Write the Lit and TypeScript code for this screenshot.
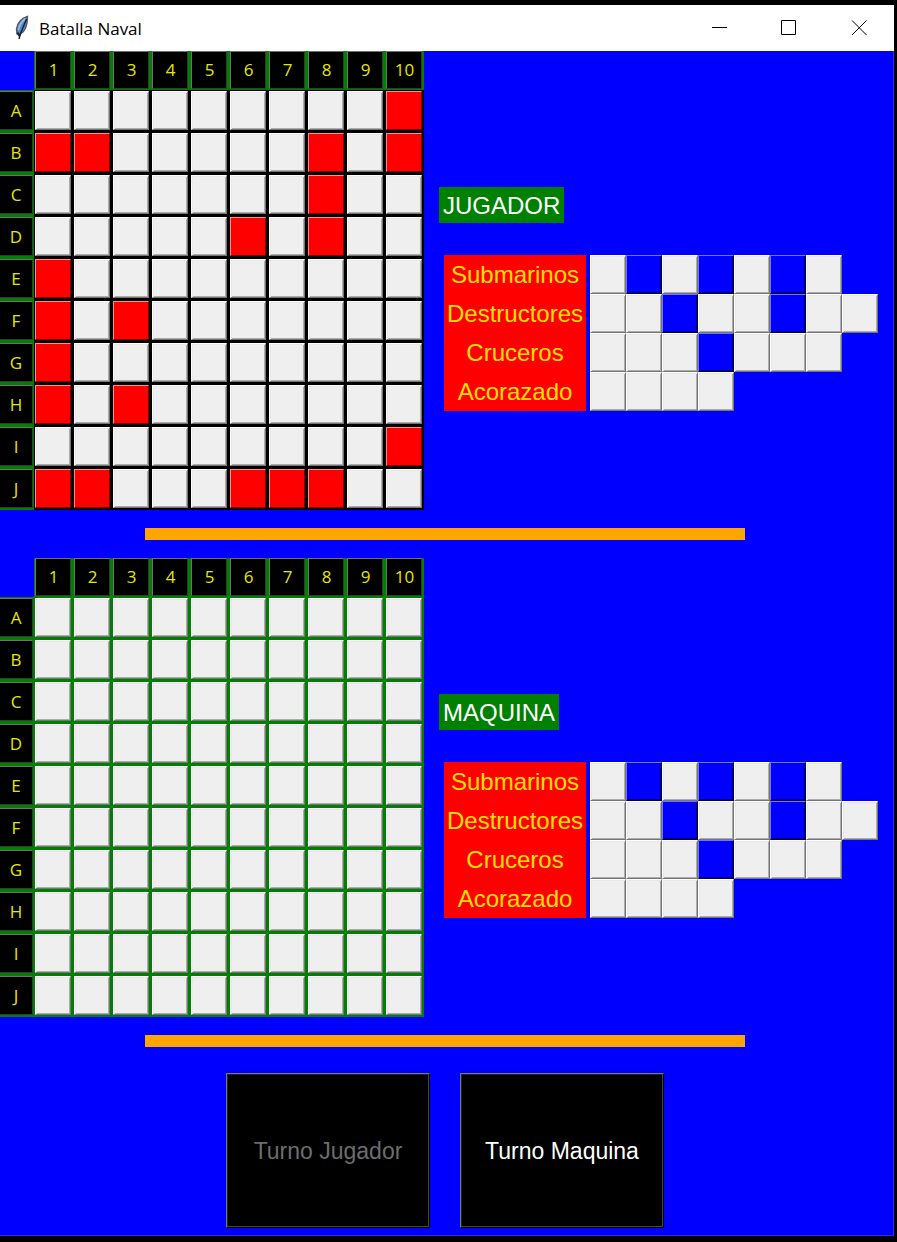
import { LitElement, html, css } from "lit";
import { customElement, property } from "lit/decorators.js";
import { classMap } from "lit/directives/class-map.js";

const COLUMNS = [1, 2, 3, 4, 5, 6, 7, 8, 9, 10];
const ROWS = "ABCDEFGHIJ".split("");

const PLAYER_SHIPS = [
  "A10", "B1", "B2", "B8", "B10", "C8", "D6", "D8", "E1", "F1", "F3",
  "G1", "H1", "H3", "I10", "J1", "J2", "J6", "J7", "J8",
];

// "#" is a ship segment, "." is the water between two ships
const FLEET = [
  { name: "Submarinos", slots: "#.#.#.#" },
  { name: "Destructores", slots: "##.##.##" },
  { name: "Cruceros", slots: "###.###" },
  { name: "Acorazado", slots: "####" },
];

@customElement("title-bar")
class TitleBar extends LitElement {
  static styles = css`
    :host {
      display: flex;
      align-items: center;
      height: 46px;
      background: #fff;
      color: #000;
      font: 17px/24px "Open Sans", "Noto Sans", sans-serif;
    }
    .feather {
      width: 16px;
      height: 26px;
      margin: 0 9px 0 14px;
    }
    .title {
      flex: 1;
      margin: 0;
      padding-top: 2px;
      font: inherit;
    }
    .control {
      width: 70px;
      height: 46px;
      padding: 0;
      border: 0;
      background: none;
      display: grid;
      place-items: center;
    }
    .control svg {
      width: 16px;
      height: 16px;
      fill: none;
      stroke: #000;
    }
  `;

  render() {
    return html`
      <svg class="feather" viewBox="0 0 16 26" aria-hidden="true">
        <path d="M13.500 1.500C8 3 3 8 2.500 14L3 19L6 19.500C10.500 17 13.500 11 13.500 1.500Z" fill="#5088c8" stroke="#55595e" stroke-width="1.400" />
        <path d="M11.500 3.500C8 6 5.500 9 4.500 15" fill="none" stroke="#8fbdec" stroke-width="1.800" />
        <path d="M12.500 4C10.500 10 7 15 5 24" fill="none" stroke="#16202c" stroke-width="1.400" />
        <path d="M3.500 17.500L5.500 21" fill="none" stroke="#16202c" stroke-width="2" />
      </svg>
      <h1 class="title">Batalla Naval</h1>
      <button class="control" aria-label="Minimizar">
        <svg viewBox="0 0 16 16"><path d="M1 7.500H16" /></svg>
      </button>
      <button class="control" aria-label="Maximizar">
        <svg viewBox="0 0 16 16"><path d="M.5 .5H14.500V14.500H.5Z" /></svg>
      </button>
      <button class="control" aria-label="Cerrar">
        <svg viewBox="0 0 16 16"><path d="M1 .5L15.500 15M15.500 .5L1 15" /></svg>
      </button>
    `;
  }
}

@customElement("game-board")
class GameBoard extends LitElement {
  @property({ attribute: false }) ships: string[] = [];
  @property() sea = "green";

  static styles = css`
    :host {
      display: block;
      flex: none;
    }
    .board {
      display: grid;
      grid-template-columns: 34px repeat(10, 39px);
      grid-template-rows: 39px repeat(10, 42px);
    }
    .slot {
      display: flex;
      padding: 1px 2px 2px 1px;
      background: #008000;
    }
    .slot.black {
      background: #000;
    }
    .slot.top {
      padding: 0 2px 1px 1px;
    }
    .slot.side {
      padding: 1px 1px 2px 0;
    }
    .cell {
      flex: 1;
      min-width: 0;
      padding: 0;
      border: 1px solid;
      border-color: #fff #757575 #757575 #fff;
      background: #efefef;
      box-shadow: inset 1px 1px #e8e8e8, inset -1px -1px #acacac;
      font: 17px/20px "Open Sans", "Noto Sans", sans-serif;
    }
    .cell.ship {
      border-color: #ff8c8c #800000 #800000 #ff8c8c;
      background: #f00;
      box-shadow: none;
    }
    .cell.label {
      border-color: #707070 #383838 #383838 #707070;
      background: #000;
      color: #e6e600;
      box-shadow: none;
    }
    .top .label {
      padding-left: 1px;
    }
    .side .label {
      border-left: 0;
    }
  `;

  render() {
    return html`
      <div class="board">
        <span></span>
        ${COLUMNS.map(
          (c) => html`<div class="slot top"><button class="cell label">${c}</button></div>`
        )}
        ${ROWS.map(
          (r) => html`
            <div class="slot side"><button class="cell label">${r}</button></div>
            ${COLUMNS.map(
              (c) => html`<div class=${classMap({ slot: true, black: this.sea === "black" })}>
                <button
                  class=${classMap({ cell: true, ship: this.ships.includes(r + c) })}
                  aria-label=${r + c}
                ></button>
              </div>`
            )}
          `
        )}
      </div>
    `;
  }
}

@customElement("fleet-panel")
class FleetPanel extends LitElement {
  @property() name = "";

  static styles = css`
    :host {
      display: flex;
      flex-direction: column;
      align-items: flex-start;
      justify-content: center;
      gap: 32px;
      padding: 36px 0 0 15px;
      font: 24px/34px "Liberation Sans", Arial, sans-serif;
    }
    .name {
      margin: 0;
      padding: 2px 4px 0;
      background: #008000;
      color: #fff;
      font: inherit;
    }
    .fleet {
      margin-left: 5px;
      border-collapse: collapse;
    }
    .kind {
      box-sizing: border-box;
      height: 39px;
      padding: 2px 3px 0;
      background: #f00;
      color: #ffe000;
      font-weight: 400;
      text-align: center;
    }
    .row {
      padding: 0 0 0 4px;
    }
    .slots {
      display: flex;
    }
    .piece {
      box-sizing: border-box;
      width: 36px;
      height: 39px;
      border: 1px solid;
      border-color: #fff #757575 #757575 #fff;
      background: #efefef;
      box-shadow: inset 1px 1px #e8e8e8, inset -1px -1px #acacac;
    }
    .piece.water {
      border-color: #7373ff #000020 #000020 #7373ff;
      background: #00f;
      box-shadow: inset -1px -1px #0000a0;
    }
  `;

  render() {
    return html`
      <h2 class="name">${this.name}</h2>
      <table class="fleet">
        ${FLEET.map(
          (f) => html`<tr>
            <th class="kind" scope="row">${f.name}</th>
            <td class="row">
              <div class="slots">
                ${f.slots
                  .split("")
                  .map((s) => html`<span class=${classMap({ piece: true, water: s === "." })}></span>`)}
              </div>
            </td>
          </tr>`
        )}
      </table>
    `;
  }
}

@customElement("app-root")
class AppRoot extends LitElement {
  static styles = css`
    :host {
      display: flex;
      flex-direction: column;
      box-sizing: border-box;
      min-height: 100vh;
      padding: 5px 3px 6px 0;
      background: #000;
    }
    .sea {
      flex: 1;
      box-sizing: border-box;
      border: solid #3030e0;
      border-width: 0 1px 1px 0;
      background: #00f;
    }
    .side {
      display: flex;
    }
    .rule {
      width: 68%;
      max-width: 600px;
      height: 12px;
      margin: 18px auto;
      border: 0;
      background: #ffa500;
    }
    .centered {
      padding-right: 3px;
    }
    .turns {
      display: flex;
      justify-content: center;
      gap: 30px;
      padding: 8px 3px 7px 0;
    }
    .turn {
      width: 204px;
      height: 155px;
      padding: 0;
      border: 1px solid;
      border-color: #777 #000 #000 #777;
      background: #000;
      box-shadow: inset -1px -1px #444, inset 1px 1px #222;
      color: #fff;
      font: 23px/28px "Liberation Sans", Arial, sans-serif;
    }
    .turn:disabled {
      color: #6d6d6d;
    }
  `;

  render() {
    return html`
      <title-bar></title-bar>
      <main class="sea">
        <section class="side">
          <game-board sea="black" .ships=${PLAYER_SHIPS}></game-board>
          <fleet-panel name="JUGADOR"></fleet-panel>
        </section>
        <div class="centered"><hr class="rule" /></div>
        <section class="side">
          <game-board></game-board>
          <fleet-panel name="MAQUINA"></fleet-panel>
        </section>
        <div class="centered"><hr class="rule" /></div>
        <div class="turns">
          <button class="turn" disabled>Turno Jugador</button>
          <button class="turn">Turno Maquina</button>
        </div>
      </main>
    `;
  }
}
